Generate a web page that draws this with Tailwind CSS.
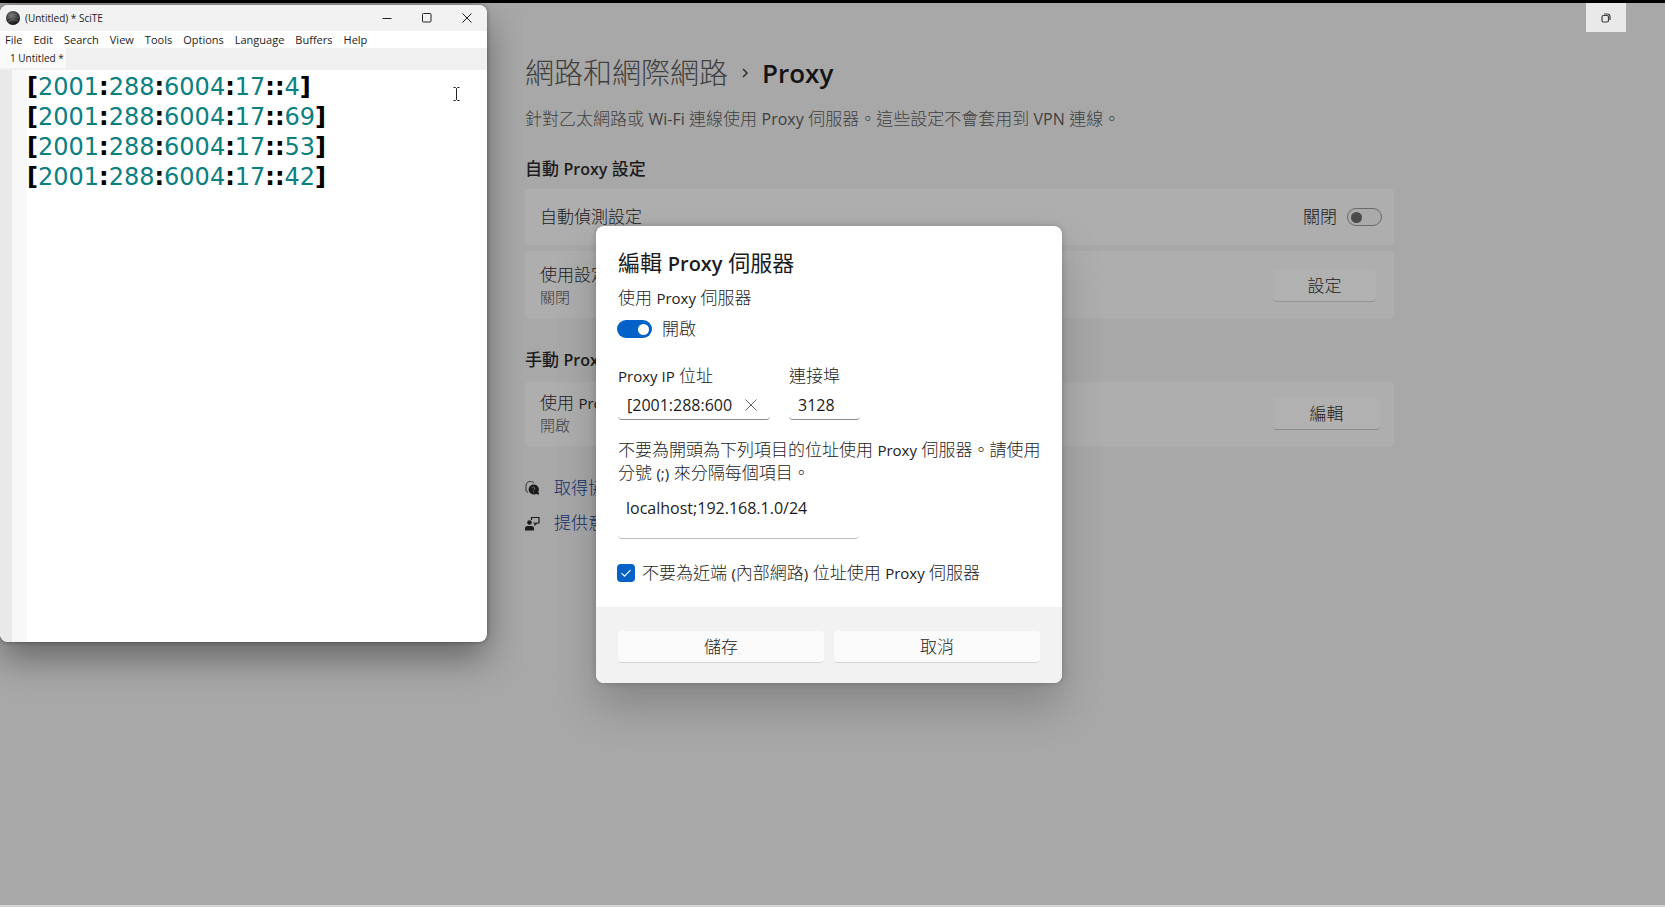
<!DOCTYPE html>
<html lang="zh-Hant">
<head>
<meta charset="utf-8">
<meta name="viewport" content="width=device-width, initial-scale=1">
<title>Proxy</title>
<script src="https://cdn.jsdelivr.net/npm/@tailwindcss/browser@4"></script>
</head>
<body class="relative min-h-screen overflow-hidden border-t-3 border-b-2 border-t-black border-b-[#d4d4d6] bg-[#a8a8a8] font-['Open_Sans','Noto_Sans_CJK_TC',sans-serif] text-[17px] leading-6 font-light text-[#1c1c1c]">

<!-- Settings page -->
<main class="pt-[50px] pr-[271px] pl-[525px]">
  <h1 class="flex h-10 items-center text-[29px] leading-10 font-light">
    <a href="#" class="text-[#404040]">網路和網際網路</a>
    <svg class="mx-[11px] w-3 h-3 shrink-0" viewBox="0 0 12 12" fill="none" stroke="#303030" stroke-width="1.5"><path d="M4 2 8 6l-4 4"/></svg>
    <span class="text-[26px] font-semibold text-[#141414]">Proxy</span>
  </h1>
  <p class="mt-3.5 text-[#404040]">針對乙太網路或 <span class="text-[16px] leading-none font-normal">Wi-Fi</span> 連線使用 <span class="text-[16px] leading-none font-normal">Proxy</span> 伺服器。這些設定不會套用到 <span class="text-[16px] leading-none font-normal">VPN</span> 連線。</p>

  <h2 class="mt-[26px] font-medium">自動 <span class="text-[16px] leading-none font-semibold">Proxy</span> 設定</h2>
  <section class="mt-2 flex flex-col gap-1.5">
    <div class="flex h-14 items-center rounded-sm bg-[#aeaeae] pr-3 pl-[15px]">
      <label for="auto-detect" class="flex-1">自動偵測設定</label>
      <span>關閉</span>
      <input id="auto-detect" type="checkbox" role="switch" class="ml-2.5 flex h-[18px] w-[35px] appearance-none items-center rounded-full border border-[#6a6a6a] bg-[#aaaaaa] pl-[3px] before:h-[11px] before:w-[11px] before:rounded-full before:bg-[#4a4a4a]">
    </div>
    <div class="flex h-[67px] items-center rounded-sm bg-[#aeaeae] pt-[3px] pr-[18px] pl-[15px]">
      <div class="flex-1"><div class="leading-[22px]">使用設定指令碼</div><div class="text-[15px] leading-[22px] text-[#404040]">關閉</div></div>
      <button class="h-8 w-[103px] rounded-sm border-b border-[#949494] bg-[#b1b1b1]">設定</button>
    </div>
  </section>

  <h2 class="mt-[30px] font-medium">手動 <span class="text-[16px] leading-none font-semibold">Proxy</span> 設定</h2>
  <section class="mt-2.5 flex h-16 items-center rounded-sm bg-[#aeaeae] pr-[14px] pl-[15px]">
    <div class="flex-1"><div class="leading-[22px]">使用 <span class="text-[15px] leading-none font-normal">Proxy</span> 伺服器</div><div class="text-[15px] leading-[22px] text-[#404040]">開啟</div></div>
    <button class="h-8 w-[107px] rounded-sm border-b border-[#8c8c8c] bg-[#b1b1b1]">編輯</button>
  </section>

  <nav class="mt-[30px] flex flex-col gap-[11px] text-[#0f2f6b]">
    <a href="#" class="flex items-center gap-[14px]">
      <svg class="w-[15px] h-[15px]" viewBox="0 0 15 15"><path d="M1 10V5.500A4.500 4.500 0 0 1 9 2" fill="none" stroke="#333"/><path d="M1 10l2 1.500" stroke="#333"/><path d="M8.500 3.500a5 5 0 1 0 2.500 9.400l3.200.9-.9-3A5 5 0 0 0 8.500 3.500z" fill="#1c1c1c"/><path d="M7.200 7.200c0-1.800 2.700-1.600 2.700.1 0 1-1.300 1.100-1.300 2M8.600 10.400v1.100" fill="none" stroke="#888" stroke-width=".8"/></svg>
      取得協助
    </a>
    <a href="#" class="flex items-center gap-[14px]">
      <svg class="w-[15px] h-[15px]" viewBox="0 0 15 15"><circle cx="4.500" cy="6.500" r="2.300" fill="#1c1c1c"/><path d="M0 14.500v-2a2.500 2.500 0 0 1 2.500-2.500h4A2.500 2.500 0 0 1 9 12.500v2z" fill="#1c1c1c"/><path d="M6.500 4V1.500h7.500v5.500h-2.200l-1.800 1.800V7H8.500" fill="none" stroke="#1c1c1c" stroke-width="1.200"/></svg>
      提供意見反應
    </a>
  </nav>
</main>

<!-- Window restore button -->
<button aria-label="還原" class="absolute top-0 right-[39px] grid h-[29px] w-10 place-items-center bg-[#e9e9e9]">
  <svg class="w-2.5 h-2.5" viewBox="0 0 10 10" fill="none" stroke="#3c3c3c"><rect x="1" y="2.500" width="6.500" height="6.500" rx="1.500" stroke-width="1.200"/><path d="M3 1h3.500a2.500 2.500 0 0 1 2.500 2.500V7" stroke-width="1.200"/></svg>
</button>

<!-- Proxy server dialog -->
<div role="dialog" aria-labelledby="dlg-title" class="absolute top-[223px] left-[596px] w-[466px] overflow-hidden rounded-lg bg-white shadow-[0_24px_44px_rgba(0,0,0,0.2),0_0_6px_rgba(0,0,0,0.2)]">
  <form class="pt-5 pr-4 pb-[22px] pl-[22px]">
    <h2 id="dlg-title" class="text-[22px] leading-8 font-normal">編輯 <span class="text-[20px] leading-none font-semibold">Proxy</span> 伺服器</h2>
    <label for="use-proxy" class="mt-2 block">使用 <span class="text-[15px] leading-none font-normal">Proxy</span> 伺服器</label>
    <div class="mt-[7px] flex items-center gap-2.5">
      <input id="use-proxy" type="checkbox" role="switch" checked class="-ml-px flex h-[18px] w-[35px] appearance-none items-center justify-end rounded-full bg-[#0461c8] pr-[3px] before:h-[11px] before:w-[11px] before:rounded-full before:bg-white">
      <span>開啟</span>
    </div>
    <div class="mt-[23px] flex gap-[19px]">
      <div class="w-[152px]">
        <label for="ip" class="block"><span class="text-[15px] leading-none font-normal">Proxy IP</span> 位址</label>
        <div class="mt-0.5 flex h-[30px] items-center rounded-sm border-b border-[#8c8c8c] pl-[9px]">
          <input id="ip" type="text" value="[2001:288:600" class="w-28 font-normal text-[16px] outline-none">
          <button type="button" aria-label="清除" class="grid size-6 place-items-center"><svg class="w-3 h-3" viewBox="0 0 12 12" stroke="#666"><path d="M.5.5l11 11M11.500.5l-11 11"/></svg></button>
        </div>
      </div>
      <div class="w-[71px]">
        <label for="port" class="block">連接埠</label>
        <div class="mt-0.5 flex h-[30px] items-center rounded-sm border-b border-[#8c8c8c] pl-[9px]">
          <input id="port" type="text" value="3128" class="w-14 font-normal text-[16px] outline-none">
        </div>
      </div>
    </div>
    <label for="exceptions" class="mt-[18px] block leading-[23px]">不要為開頭為下列項目的位址使用 <span class="text-[15px] leading-none font-normal">Proxy</span> 伺服器。請使用分號 <span class="text-[15px] leading-none font-normal">(;)</span> 來分隔每個項目。</label>
    <textarea id="exceptions" class="mt-2 block h-[47px] w-[241px] resize-none overflow-hidden rounded-sm border-b border-[#bdbdbd] pt-1 pl-2 text-[16px] leading-6 font-normal outline-none">localhost;192.168.1.0/24</textarea>
    <div class="mt-[22px] flex items-center gap-[7px]">
      <span class="relative -ml-px size-[18px]">
        <input id="local" type="checkbox" checked class="block size-[18px] appearance-none rounded-sm bg-[#0461c8]">
        <svg class="pointer-events-none absolute inset-0 w-[18px] h-[18px]" viewBox="0 0 18 18" fill="none" stroke="#fff" stroke-width="1.100"><path d="M4.500 9.200l3 3 6-6"/></svg>
      </span>
      <label for="local">不要為近端 <span class="text-[15px] leading-none font-normal">(</span>內部網路<span class="text-[15px] leading-none font-normal">)</span> 位址使用 <span class="text-[15px] leading-none font-normal">Proxy</span> 伺服器</label>
    </div>
  </form>
  <footer class="flex gap-2.5 bg-[#f2f2f2] px-[22px] pt-6 pb-5">
    <button class="h-8 flex-1 rounded-sm border-b border-[#d6d6d6] bg-[#fbfbfb]">儲存</button>
    <button class="h-8 flex-1 rounded-sm border-b border-[#d6d6d6] bg-[#fbfbfb]">取消</button>
  </footer>
</div>

<!-- SciTE editor window -->
<section aria-label="SciTE" class="absolute top-0.5 left-0 flex h-[637px] w-[487px] flex-col overflow-hidden rounded-lg bg-white text-[11px] font-normal leading-4 shadow-[0_16px_36px_rgba(0,0,0,0.4),0_0_4px_rgba(0,0,0,0.4)]">
  <header class="flex h-[26px] items-center bg-[#f2f2f2] pl-1.5">
    <svg class="w-3.5 h-3.5" viewBox="0 0 14 14"><defs><radialGradient id="ball" cx=".4" cy=".3" r=".7"><stop offset="0" stop-color="#777"/><stop offset="1" stop-color="#111"/></radialGradient></defs><circle cx="7" cy="7" r="7" fill="url(#ball)"/><path d="M2 5q4-3 9-1M1 8q5-4 12-1M2 11q5-4 10-1" fill="none" stroke="#888" stroke-width=".5"/></svg>
    <span class="ml-[5px] flex-1 text-[10px]">(Untitled) * SciTE</span>
    <button aria-label="Minimize" class="grid h-full w-10 place-items-center"><svg class="w-2.5 h-2.5" viewBox="0 0 10 10" stroke="#222"><path d="M.5 5.500h9"/></svg></button>
    <button aria-label="Maximize" class="grid h-full w-10 place-items-center"><svg class="w-2.5 h-2.5" viewBox="0 0 10 10" fill="none" stroke="#222"><rect x=".5" y=".5" width="8.500" height="8.500" rx="1"/></svg></button>
    <button aria-label="Close" class="grid h-full w-10 place-items-center"><svg class="w-2.5 h-2.5" viewBox="0 0 10 10" stroke="#222"><path d="M.5.5l9 9M9.500.5l-9 9"/></svg></button>
  </header>
  <nav class="flex h-[17px] shrink-0 items-center gap-[11px] pl-[5px]">
    <button>File</button><button>Edit</button><button>Search</button><button>View</button><button>Tools</button><button>Options</button><button>Language</button><button>Buffers</button><button>Help</button>
  </nav>
  <div class="flex h-[22px] shrink-0 items-start bg-[#f0f0f0]">
    <button class="h-5 bg-[#fafafa] pr-0.5 pl-2.5 text-[10px]">1 Untitled *</button>
  </div>
  <div class="flex flex-1">
    <div class="w-3 bg-[#e9e9e9]"></div>
    <div class="w-[15px] bg-[#f8f8f8]"></div>
    <pre class="flex-1 pt-0.5 font-['DejaVu_Sans',sans-serif] text-[24px] leading-[30px] font-normal text-[#0b8080]"><b class="text-black">[</b>2001<b class="text-black">:</b>288<b class="text-black">:</b>6004<b class="text-black">:</b>17<b class="text-black">::</b>4<b class="text-black">]</b>
<b class="text-black">[</b>2001<b class="text-black">:</b>288<b class="text-black">:</b>6004<b class="text-black">:</b>17<b class="text-black">::</b>69<b class="text-black">]</b>
<b class="text-black">[</b>2001<b class="text-black">:</b>288<b class="text-black">:</b>6004<b class="text-black">:</b>17<b class="text-black">::</b>53<b class="text-black">]</b>
<b class="text-black">[</b>2001<b class="text-black">:</b>288<b class="text-black">:</b>6004<b class="text-black">:</b>17<b class="text-black">::</b>42<b class="text-black">]</b></pre>
  </div>
</section>

<!-- Text cursor -->
<svg class="absolute top-[84px] left-[452px] w-[9px] h-[14px]" viewBox="0 0 9 14" fill="none" stroke="#222"><path d="M1.500.5h2l1 1 1-1h2M4.500 1.500v11M1.500 13.500h2l1-1 1 1h2"/></svg>
</body>
</html>
